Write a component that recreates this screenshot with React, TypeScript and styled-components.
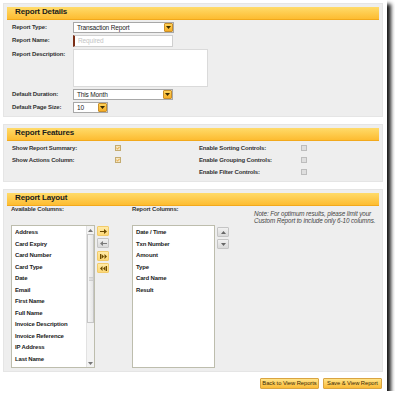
import React from "react";
import styled, { createGlobalStyle } from "styled-components";

const FONT = `"Liberation Sans", Arial, sans-serif`;

const Global = createGlobalStyle`
  html, body { margin: 0; padding: 0; background: #fff; }
  body { font-family: ${FONT}; }
  * { box-sizing: border-box; }
`;

const Frame = styled.div`
  width: 387px;
  height: 391px;
  background: #fff;
  box-shadow: 4px 4px 4px rgba(0, 0, 0, 0.9);
  padding: 3px 4px 0 3px;
  display: flex;
  flex-direction: column;
`;

const Panels = styled.div`
  display: flex;
  flex-direction: column;
  gap: 7px;
`;

const Panel = styled.section`
  background: #eeeeee;
  border: 1px solid #e5e5e5;
  padding: 3px;
`;

const Header = styled.h2`
  margin: 0;
  height: 13px;
  line-height: 13px;
  padding-left: 8px;
  background: linear-gradient(#ffdb6a, #fdbc31);
  border-bottom: 1px solid #f2a91c;
  font: bold 8px ${FONT};
  letter-spacing: -0.15px;
  color: #1b1b1b;
`;

/* ---------- details ---------- */
const DetailsBody = styled.div`
  display: flex;
  flex-direction: column;
  gap: 2px;
  padding: 2px 0 0 5px;
`;

const Row = styled.div`
  display: flex;
  align-items: flex-start;
`;

const Label = styled.label<{ w?: number }>`
  width: ${(p) => p.w ?? 61}px;
  flex: none;
  font: bold 6px ${FONT};
  letter-spacing: -0.15px;
  line-height: 11px;
  color: #333;
  white-space: nowrap;
`;

const SelectBox = styled.div<{ w: number }>`
  width: ${(p) => p.w}px;
  height: 11px;
  border: 1px solid #a8a8a8;
  background: #fff;
  display: flex;
`;

const SelectText = styled.span`
  flex: 1;
  padding-left: 3px;
  font: 6.5px ${FONT};
  letter-spacing: -0.15px;
  line-height: 9px;
  color: #222;
`;

const SelectArrow = styled.span`
  width: 9px;
  background: linear-gradient(#ffd35a, #f6ae26);
  border: 1px solid #c98f2a;
  border-radius: 1px;
  display: flex;
  align-items: center;
  justify-content: center;
`;

const TextInput = styled.div`
  width: 100px;
  height: 12px;
  border: 1px solid #cfcfcf;
  border-left: 2px solid #7b2e16;
  background: #fff;
  padding-left: 3px;
  font: 6.5px ${FONT};
  letter-spacing: -0.1px;
  line-height: 10px;
  color: #c4c4c4;
`;

const TextArea = styled.div`
  width: 135px;
  height: 38px;
  border: 1px solid #dadada;
  background: #fff;
`;

/* ---------- features ---------- */
const FeatureGrid = styled.div`
  display: grid;
  grid-template-columns: 103px 84px 102px auto;
  grid-auto-rows: 12px;
  align-items: center;
  padding: 1px 0 0 5px;
`;

const Check = styled.span<{ on?: boolean }>`
  width: 6px;
  height: 6px;
  border: 1px solid ${(p) => (p.on ? "#c4ab70" : "#bcbcbc")};
  background: ${(p) => (p.on ? "#f4e5c2" : "#dedede")};
  display: flex;
  align-items: center;
  justify-content: center;
`;

/* ---------- layout ---------- */
const LayoutBody = styled.div`
  display: flex;
  align-items: flex-start;
  padding-left: 4px;
`;

const Column = styled.div<{ ml?: number }>`
  display: flex;
  flex-direction: column;
  margin-left: ${(p) => p.ml ?? 0}px;
`;

const ColLabel = styled.div`
  height: 19px;
  line-height: 18px;
  font: bold 6px ${FONT};
  letter-spacing: -0.15px;
  color: #333;
  white-space: nowrap;
`;

const ListBox = styled.div<{ w: number }>`
  width: ${(p) => p.w}px;
  height: 143px;
  border: 1px solid #bdbdad;
  background: #fff;
  display: flex;
`;

const Items = styled.ul`
  flex: 1;
  margin: 0;
  padding: 1px 0 0 3px;
  list-style: none;
  overflow: hidden;
`;

const Item = styled.li`
  font: bold 6px ${FONT};
  letter-spacing: -0.15px;
  line-height: 11.5px;
  color: #222;
  white-space: nowrap;
`;

const Scrollbar = styled.div`
  width: 8px;
  display: flex;
  flex-direction: column;
  background: #f3f3f3;
  border-left: 1px solid #e2e2e2;
`;

const ScrollArrow = styled.div`
  height: 8px;
  display: flex;
  align-items: center;
  justify-content: center;
`;

const Thumb = styled.div`
  height: 89px;
  border: 1px solid #c6c6c6;
  background: linear-gradient(90deg, #f7f7f7, #e6e6e6);
  display: flex;
  align-items: center;
  justify-content: center;
`;

const Track = styled.div`
  flex: 1;
`;

const ButtonStack = styled.div<{ mt: number; gap: number }>`
  display: flex;
  flex-direction: column;
  gap: ${(p) => p.gap}px;
  margin-top: ${(p) => p.mt}px;
  margin-left: 2px;
`;

const MoveBtn = styled.div<{ tone: "yellow" | "grey"; mt?: number }>`
  width: 12px;
  height: 10px;
  margin-top: ${(p) => p.mt ?? 0}px;
  border: 1px solid ${(p) => (p.tone === "yellow" ? "#f2cb6a" : "#c4c4c4")};
  background: ${(p) =>
    p.tone === "yellow"
      ? "linear-gradient(#ffeaa6, #fdd877)"
      : "linear-gradient(#f1f1f1, #d9d9d9)"};
  border-radius: 1px;
  display: flex;
  align-items: center;
  justify-content: center;
`;

const Note = styled.p`
  margin: 4px 0 0 25px;
  width: 124px;
  font: italic 6.3px ${FONT};
  letter-spacing: -0.1px;
  line-height: 7px;
  color: #444;
`;

/* ---------- footer ---------- */
const Footer = styled.div`
  display: flex;
  justify-content: flex-end;
  gap: 4px;
  margin-top: 6px;
  padding-right: 1px;
`;

const ActionBtn = styled.button`
  width: 59px;
  height: 11px;
  padding: 0;
  border: 1px solid #d9a441;
  border-radius: 1px;
  background: linear-gradient(#ffe388, #fbbb35);
  font: 5.8px ${FONT};
  letter-spacing: -0.05px;
  line-height: 9px;
  color: #3b2a05;
  white-space: nowrap;
`;

const Down = ({ c = "#3a2a00" }: { c?: string }) => (
  <svg width="5" height="3" viewBox="0 0 5 3">
    <path d="M0 0h5L2.5 3z" fill={c} />
  </svg>
);
const Up = ({ c = "#555" }: { c?: string }) => (
  <svg width="5" height="3" viewBox="0 0 5 3">
    <path d="M0 3h5L2.5 0z" fill={c} />
  </svg>
);

const CheckMark = () => (
  <svg width="5" height="4" viewBox="0 0 5 4">
    <path d="M0.5 2l1.3 1.3L4.6 0.5" stroke="#e08a00" strokeWidth="1" fill="none" />
  </svg>
);

const ArrowRight = ({ c }: { c: string }) => (
  <svg width="7" height="5" viewBox="0 0 7 5">
    <path d="M0 2.5h4.5" stroke={c} strokeWidth="1" />
    <path d="M4 0l3 2.5L4 5z" fill={c} />
  </svg>
);
const ArrowLeft = ({ c }: { c: string }) => (
  <svg width="7" height="5" viewBox="0 0 7 5">
    <path d="M2.5 2.5H7" stroke={c} strokeWidth="1" />
    <path d="M3 0L0 2.5L3 5z" fill={c} />
  </svg>
);
const DoubleRight = ({ c }: { c: string }) => (
  <svg width="7" height="5" viewBox="0 0 7 5">
    <path d="M.5 0v5" stroke={c} strokeWidth="1" />
    <path d="M1.5 0l2.5 2.5L1.5 5zM4.5 0L7 2.5 4.5 5z" fill={c} />
  </svg>
);
const DoubleLeft = ({ c }: { c: string }) => (
  <svg width="7" height="5" viewBox="0 0 7 5">
    <path d="M2.5 0L0 2.5 2.5 5zM5.5 0L3 2.5 5.5 5z" fill={c} />
    <path d="M6.5 0v5" stroke={c} strokeWidth="1" />
  </svg>
);

const Select = ({ w, value }: { w: number; value: string }) => (
  <SelectBox w={w}>
    <SelectText>{value}</SelectText>
    <SelectArrow>
      <Down />
    </SelectArrow>
  </SelectBox>
);

const available = [
  "Address",
  "Card Expiry",
  "Card Number",
  "Card Type",
  "Date",
  "Email",
  "First Name",
  "Full Name",
  "Invoice Description",
  "Invoice Reference",
  "IP Address",
  "Last Name",
];
const chosen = ["Date / Time", "Txn Number", "Amount", "Type", "Card Name", "Result"];

export default function App() {
  return (
    <>
      <Global />
      <Frame>
        <Panels>
          <Panel>
            <Header>Report Details</Header>
            <DetailsBody>
              <Row>
                <Label>Report Type:</Label>
                <Select w={101} value="Transaction Report" />
              </Row>
              <Row>
                <Label>Report Name:</Label>
                <TextInput>Required</TextInput>
              </Row>
              <Row>
                <Label>Report Description:</Label>
                <TextArea />
              </Row>
              <Row>
                <Label>Default Duration:</Label>
                <Select w={100} value="This Month" />
              </Row>
              <Row>
                <Label>Default Page Size:</Label>
                <Select w={35} value="10" />
              </Row>
            </DetailsBody>
          </Panel>

          <Panel>
            <Header>Report Features</Header>
            <FeatureGrid>
              <Label>Show Report Summary:</Label>
              <Check on>
                <CheckMark />
              </Check>
              <Label>Enable Sorting Controls:</Label>
              <Check />
              <Label>Show Actions Column:</Label>
              <Check on>
                <CheckMark />
              </Check>
              <Label>Enable Grouping Controls:</Label>
              <Check />
              <span />
              <span />
              <Label>Enable Filter Controls:</Label>
              <Check />
            </FeatureGrid>
          </Panel>

          <Panel>
            <Header>Report Layout</Header>
            <LayoutBody>
              <Column>
                <ColLabel>Available Columns:</ColLabel>
                <ListBox w={84}>
                  <Items>
                    {available.map((a) => (
                      <Item key={a}>{a}</Item>
                    ))}
                  </Items>
                  <Scrollbar>
                    <ScrollArrow>
                      <Up c="#777" />
                    </ScrollArrow>
                    <Thumb>
                      <svg width="4" height="4" viewBox="0 0 4 4">
                        <path d="M0 .5h4M0 2h4M0 3.5h4" stroke="#bbb" strokeWidth="0.6" />
                      </svg>
                    </Thumb>
                    <Track />
                    <ScrollArrow>
                      <Down c="#777" />
                    </ScrollArrow>
                  </Scrollbar>
                </ListBox>
              </Column>

              <ButtonStack mt={20} gap={2}>
                <MoveBtn tone="yellow">
                  <ArrowRight c="#6b4a00" />
                </MoveBtn>
                <MoveBtn tone="grey">
                  <ArrowLeft c="#7a7a7a" />
                </MoveBtn>
                <MoveBtn tone="yellow" mt={1}>
                  <DoubleRight c="#6b4a00" />
                </MoveBtn>
                <MoveBtn tone="yellow">
                  <DoubleLeft c="#6b4a00" />
                </MoveBtn>
              </ButtonStack>

              <Column ml={23}>
                <ColLabel>Report Columns:</ColLabel>
                <ListBox w={83}>
                  <Items>
                    {chosen.map((a) => (
                      <Item key={a}>{a}</Item>
                    ))}
                  </Items>
                </ListBox>
              </Column>

              <ButtonStack mt={21} gap={2}>
                <MoveBtn tone="grey">
                  <Up c="#666" />
                </MoveBtn>
                <MoveBtn tone="grey">
                  <Down c="#666" />
                </MoveBtn>
              </ButtonStack>

              <Note>
                Note: For optimum results, please limit your Custom Report to include only 6-10
                columns.
              </Note>
            </LayoutBody>
          </Panel>
        </Panels>

        <Footer>
          <ActionBtn>Back to View Reports</ActionBtn>
          <ActionBtn>Save &amp; View Report</ActionBtn>
        </Footer>
      </Frame>
    </>
  );
}
